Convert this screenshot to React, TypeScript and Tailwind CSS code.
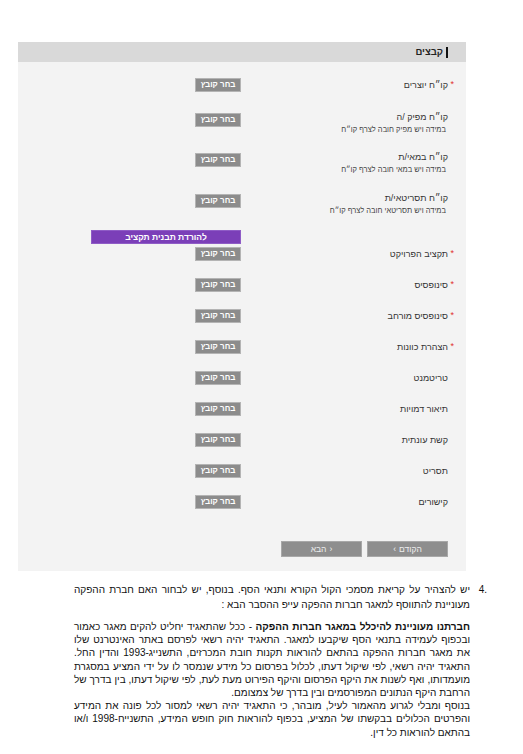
import React from "react"

type Row = {
  label: string
  required?: boolean
  sub?: string
  h: string
}

const rows: Row[] = [
  { label: "קו״ח יוצרים", required: true, h: "h-[35px]" },
  { label: "קו״ח מפיק /ה", sub: "במידה ויש מפיק חובה לצרף קו״ח", h: "h-[40px]" },
  { label: "קו״ח במאי/ת", sub: "במידה ויש במאי חובה לצרף קו״ח", h: "h-[41px]" },
  { label: "קו״ח תסריטאי/ת", sub: "במידה ויש תסריטאי חובה לצרף קו״ח", h: "h-[36px]" },
]

const rows2: Row[] = [
  { label: "תקציב הפרויקט", required: true, h: "h-[31px]" },
  { label: "סינופסיס", required: true, h: "h-[31px]" },
  { label: "סינופסיס מורחב", required: true, h: "h-[31px]" },
  { label: "הצהרת כוונות", required: true, h: "h-[31px]" },
  { label: "טריטמנט", h: "h-[31px]" },
  { label: "תיאור דמויות", h: "h-[31px]" },
  { label: "קשת עונתית", h: "h-[31px]" },
  { label: "תסריט", h: "h-[31px]" },
  { label: "קישורים", h: "h-[46px]" },
]

function FileButton() {
  return (
    <button className="w-[46px] h-[14px] shrink-0 bg-[#8c8c8c] border border-[#b4b4b4] text-white font-bold text-[8px] leading-none">
      בחר קובץ
    </button>
  )
}

function FormRow({ row }: { row: Row }) {
  return (
    <div className={`flex items-start ${row.h}`}>
      <div className="w-[207px] shrink-0 pl-[8px] text-right">
        <div className={`text-[9px] leading-[14px] text-[#333] ${row.sub ? "-mt-[3px]" : ""}`}>
          <span className="relative">
            {row.label}
            {row.required && (
              <span className="absolute -right-[6px] -top-[3px] text-[#e0302f] text-[9px]">*</span>
            )}
          </span>
        </div>
        {row.sub && <div className="mt-[1px] text-[7.5px] leading-[10px] text-[#444] pr-[2px]">{row.sub}</div>}
      </div>
      <FileButton />
    </div>
  )
}

const fullLine = "text-justify [text-align-last:justify]"

export default function App() {
  return (
    <div className="w-[523px] h-[754px] bg-white overflow-hidden font-['Liberation_Sans',Arial,sans-serif]">
      <div className="h-[42px]" />
      <div dir="rtl" className="ml-[18px] w-[448px] bg-[#f3f3f3]">
        <div className="h-[20px] bg-[#d9d9d9] flex items-center pr-[18px]">
          <div className="w-[2px] h-[11px] bg-[#111]" />
          <div className="mr-[3px] text-[9.5px] font-bold text-[#222]">קבצים</div>
        </div>
        <div className="pr-[18px] pt-[16px] pb-[14px]">
          {rows.map((r) => (
            <FormRow key={r.label} row={r} />
          ))}
          <div className="flex h-[17px]">
            <div className="w-[207px] shrink-0" />
            <button className="w-[150px] h-[14px] bg-[#7b3fb8] border border-[#8f5cc6] text-white font-bold text-[8.5px] leading-none">
              להורדת תבנית תקציב
            </button>
          </div>
          {rows2.map((r) => (
            <FormRow key={r.label} row={r} />
          ))}
          <div className="flex gap-[5px]">
            <button className="w-[81px] h-[16px] bg-[#8e8e8e] border border-[#a8a8a8] text-[#eeeeee] text-[8.5px] leading-none">
              <div dir="ltr" className="flex items-center justify-center gap-[3px]">
                <span>‹</span>
                <span>הקודם</span>
              </div>
            </button>
            <button className="w-[81px] h-[16px] bg-[#8e8e8e] border border-[#a8a8a8] text-[#eeeeee] text-[8.5px] leading-none">
              <div dir="ltr" className="flex items-center justify-center gap-[3px]">
                <span>הבא</span>
                <span>›</span>
              </div>
            </button>
          </div>
        </div>
      </div>

      <div dir="rtl" className="flex pr-[36px] pl-[74px] mt-[11px] text-[10px] text-[#111]">
        <div className="w-[17px] shrink-0 leading-[15px] text-right">
          <span dir="ltr">4.</span>
        </div>
        <div className="w-[396px]">
          <div className="leading-[15px]">
            <div className={fullLine}>יש להצהיר על קריאת מסמכי הקול הקורא ותנאי הסף. בנוסף, יש לבחור האם חברת ההפקה</div>
            <div>מעוניינת להתווסף למאגר חברות ההפקה עייפ ההסבר הבא :</div>
          </div>
          <div className="mt-[8px] leading-[13.2px]">
            <div className={fullLine}>
              <b>חברתנו מעוניינת להיכלל במאגר חברות ההפקה</b> - ככל שהתאגיד יחליט להקים מאגר כאמור
            </div>
            <div className={fullLine}>ובכפוף לעמידה בתנאי הסף שיקבעו למאגר. התאגיד יהיה רשאי לפרסם באתר האינטרנט שלו</div>
            <div className={fullLine}>את מאגר חברות ההפקה בהתאם להוראות תקנות חובת המכרזים, התשנייג-1993 והדין החל.</div>
            <div className={fullLine}>התאגיד יהיה רשאי, לפי שיקול דעתו, לכלול בפרסום כל מידע שנמסר לו על ידי המציע במסגרת</div>
            <div className={fullLine}>מועמדותו, ואף לשנות את היקף הפרסום והיקף הפירוט מעת לעת, לפי שיקול דעתו, בין בדרך של</div>
            <div>הרחבת היקף הנתונים המפורסמים ובין בדרך של צמצומם.</div>
            <div className={fullLine}>בנוסף ומבלי לגרוע מהאמור לעיל, מובהר, כי התאגיד יהיה רשאי למסור לכל פונה את המידע</div>
            <div className={fullLine}>והפרטים הכלולים בבקשתו של המציע, בכפוף להוראות חוק חופש המידע, התשנייח-1998 ו/או</div>
            <div>בהתאם להוראות כל דין.</div>
          </div>
        </div>
      </div>
    </div>
  )
}
